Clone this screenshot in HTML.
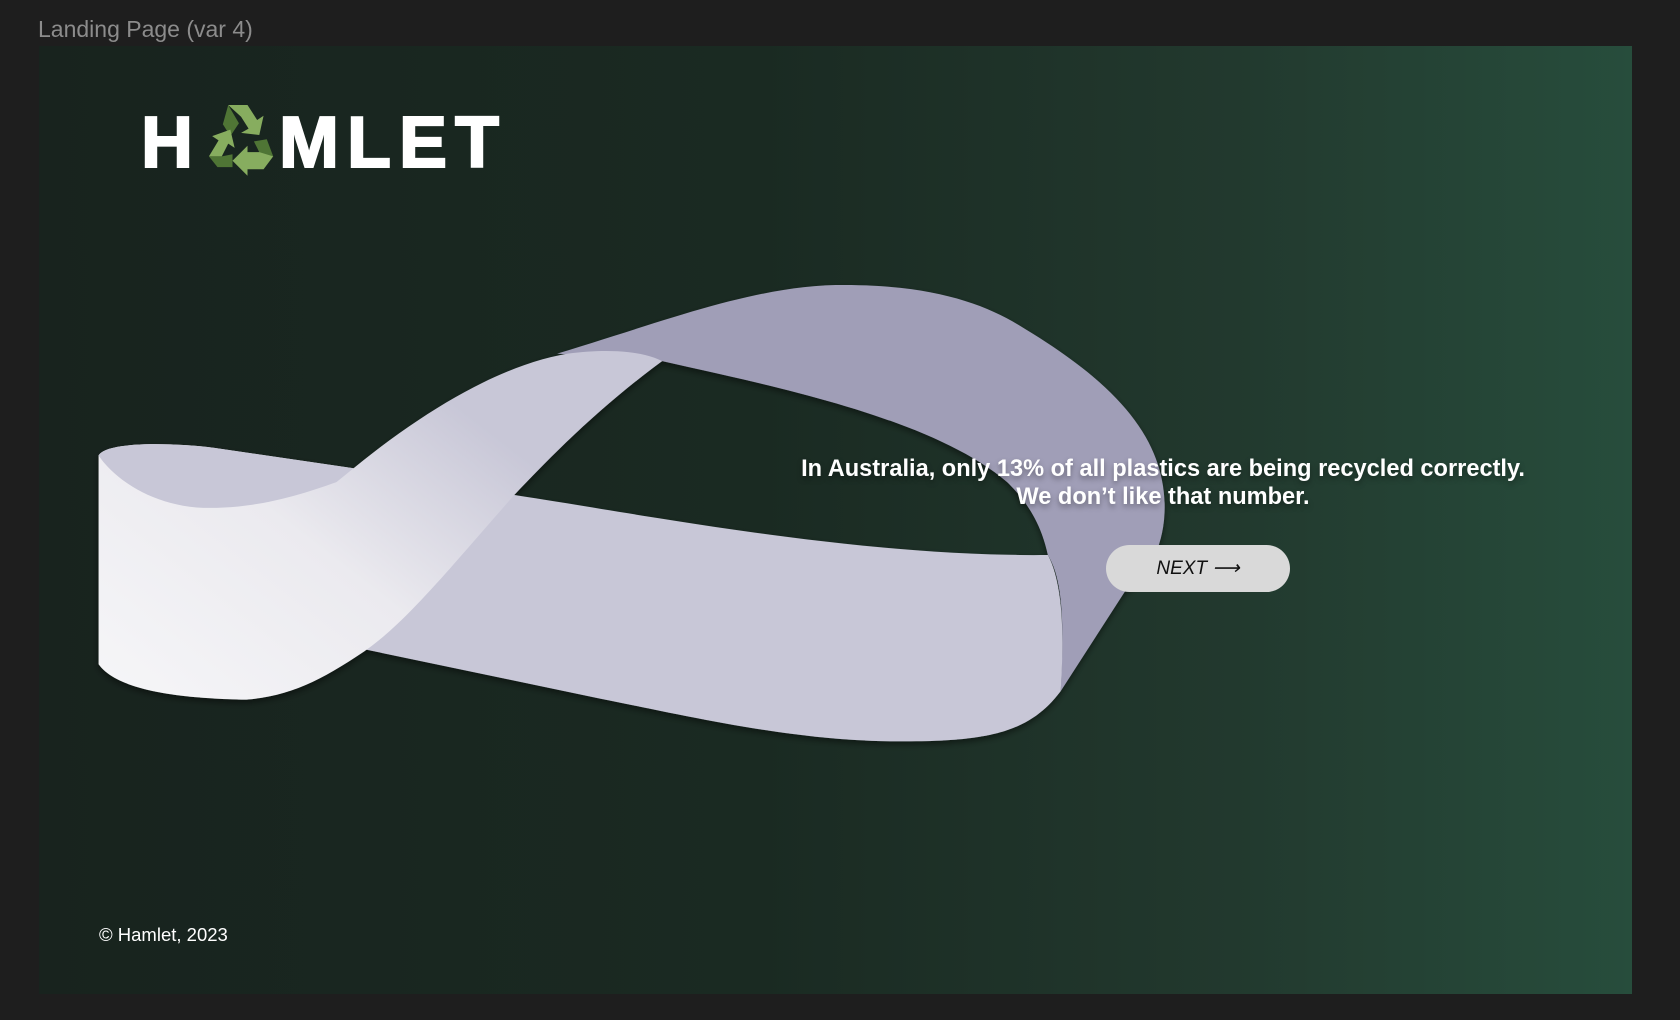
<!DOCTYPE html>
<html><head><meta charset="utf-8"><style>
html,body{margin:0;padding:0;width:1680px;height:1020px;overflow:hidden;background:#1e1e1e;font-family:"Liberation Sans",sans-serif}
.title{position:absolute;left:38px;top:16px;font-size:23px;color:#8c8c8c}
.frame{position:absolute;left:39px;top:46px;width:1593px;height:948px;background:linear-gradient(90deg,#18231e 0%,#1a2a22 45%,#22392e 75%,#274d3c 100%);overflow:hidden}
svg.art{position:absolute;left:0;top:0}
.logo{position:absolute;left:141px;top:106px;font-weight:bold;font-size:72px;color:#fff;letter-spacing:8px;line-height:74px;-webkit-text-stroke:2px #fff}
.msg{position:absolute;left:753px;width:820px;top:455px;text-align:center;color:#fff;font-weight:bold;font-size:23.6px;line-height:28px;text-shadow:0 3px 6px rgba(0,0,0,.35)}
.btn{position:absolute;left:1106px;top:545px;width:184px;height:47px;border-radius:24px;background:#d9d9d9;color:#111;font-style:italic;font-size:19px;line-height:47px;text-align:center}
.copy{position:absolute;left:99px;top:924px;color:#fff;font-size:18.5px}
</style></head><body>
<div class="title">Landing Page (var 4)</div>
<div class="frame"></div>
<svg class="art" width="1680" height="1020" viewBox="0 0 1568 952">
<defs>
<linearGradient id="w" x1="0" y1="1" x2="1" y2="0.2">
<stop offset="0" stop-color="#f6f6f8"/><stop offset="0.45" stop-color="#ebeaef"/><stop offset="0.8" stop-color="#c8c7d7"/></linearGradient>
<filter id="sh" x="-10%" y="-10%" width="120%" height="130%"><feDropShadow dx="0" dy="3" stdDeviation="3" flood-color="#000" flood-opacity=".45"/></filter>
</defs>
<g filter="url(#sh)">
<path fill="#a09eb7" d="M520,330 C620,300 700,268 780,266 C860,265 910,280 945,300 C1030,350 1085,400 1087,470 C1088,510 1070,540 1050,552 L990,645 C992,600 995,545 978,518 C970,480 950,460 940,450 C870,390 720,360 618,337 Z"/>
<path fill="#c8c7d7" d="M480,462 C600,480 800,520 978,518 C995,550 992,610 990,645 C960,685 920,692 840,692 C740,692 640,668 560,652 L340,606 L380,530 Z"/>
<path fill="url(#w)" d="M92,425 C100,412 160,413 200,418 L330,437 C400,380 470,340 530,330 C570,325 600,328 618,337 C560,380 520,420 480,462 C420,530 380,580 340,608 C300,635 270,650 230,653 C170,652 110,645 92,620 Z"/>
<path fill="#c8c7d7" d="M92,425 C100,412 160,413 200,418 L330,437 L314,450 C280,462 240,475 190,474 C140,472 105,445 92,425 Z"/>
</g>
<g transform="translate(225,128)">
<path fill="#87ad5f" d="M-12,-30 L6,-30 L15,-16 L21,-20 L17,-2 L0,-4 L7,-8 L0,-19 Z"/>
<path fill="#4f7535" d="M-12,-30 L-2,-13 L-10,-1 L-17,-12 Z"/>
<path fill="#87ad5f" d="M-30,18 L-21,3 L-27,-1 L-10,-7 L-6,10 L-12,6 L-18,18 Z"/>
<path fill="#4f7535" d="M-30,18 L-22,28 L-8,28 L-8,16 L-18,18 Z"/>
<path fill="#87ad5f" d="M30,18 L21,30 L6,30 L6,36 L-8,22 L6,8 L6,14 L17,14 L14,6 Z"/>
<path fill="#4f7535" d="M30,18 L24,2 L12,4 L17,14 Z"/>
</g>
</svg>
<div class="logo">H<span style="display:inline-block;width:78px"></span>MLET</div>
<div class="msg">In Australia, only 13% of all plastics are being recycled correctly.<br>We don’t like that number.</div>
<div class="btn">NEXT ⟶</div>
<div class="copy">© Hamlet, 2023</div>
</body></html>
